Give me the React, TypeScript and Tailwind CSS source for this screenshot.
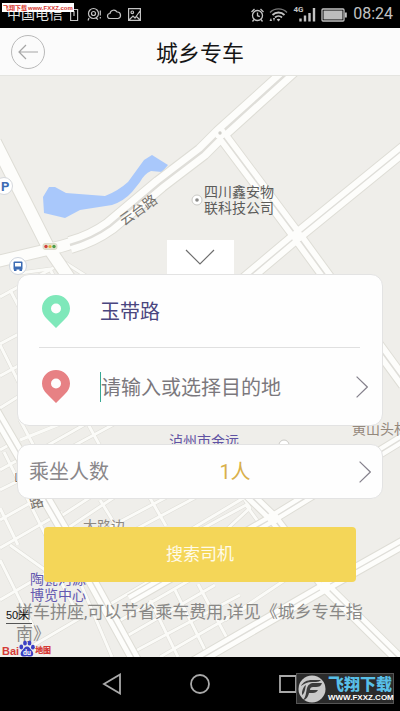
import React, { useState } from "react";

const cjk = "font-[Roboto,'Noto_Sans_CJK_SC',sans-serif]";

type Street = { d: string; w: number; line?: number };

const minorStreets: string[] = [
  "M0 297L64 262L140 310",
  "M20 273L50 269L54 277",
  "M0 344L30 328L10 290",
  "M0 376L40 354",
  "M0 408L24 393L0 345",
  "M20 440L60 424L92 400",
  "M36 452L96 418",
  "M66 450L140 410",
  "M20 420L44 465",
  "M88 424L100 446",
  "M0 450L16 441L90 583",
  "M0 470L18 460",
  "M0 490L22 479",
  "M0 520L46 494",
  "M0 548L62 512",
  "M4 452L48 540",
  "M0 508L18 545",
  "M0 560L34 628",
  "M0 600L48 572L10 545",
  "M34 645L80 618L60 580",
  "M55 520L92 496",
  "M62 532L140 480",
  "M78 544L180 490",
  "M86 556L200 495",
  "M100 500L116 526",
  "M150 498L166 526",
  "M190 530L262 487",
  "M226 530L250 508L240 492",
  "M200 530L246 505L262 527",
  "M80 582L112 657",
  "M100 610L160 575",
  "M112 625L190 580",
  "M120 640L215 585",
  "M128 655L240 595",
  "M150 600L178 657",
  "M175 590L205 650",
  "M198 584L228 640",
  "M225 620L285 580",
  "M160 657L250 605",
];

const roads: Street[] = [
  { d: "M-5 142L48 247L84 300", w: 12 },
  { d: "M-5 262L50 249Q74 244 92 235", w: 11 },
  { d: "M70 245Q92 239 110 226L160 184L202 152L220 134L292 69", w: 16, line: 2.4 },
  { d: "M220 133L297 236L405 384", w: 13, line: 1.6 },
  { d: "M405 148L297 236L240 284L150 350", w: 13, line: 1.4 },
  { d: "M-5 412L62 527L138 665", w: 11, line: 1.4 },
  { d: "M405 437L273 518L130 600", w: 10, line: 1.4 },
  { d: "M240 486L273 518L325 586L405 665", w: 11, line: 1.4 },
  { d: "M405 542L325 587L190 665", w: 11, line: 1.4 },
];

function MapLayer() {
  return (
    <svg
      aria-hidden="true"
      className={`absolute inset-0 h-full w-full ${cjk}`}
      viewBox="0 76 400 581"
      preserveAspectRatio="xMidYMid slice"
    >
      <rect x="-200" y="-100" width="800" height="1000" fill="#efeeea" />
      <path d="M44 213L43 197L49 187L55 187L66 193L105 196Q118 191 128 182L144 160L152 155L168 165L162 172L151 171Q144 174 140 182L132 192Q124 201 112 205L80 210L65 218Z" fill="#a9c8fb" />
      <g fill="none" strokeLinejoin="round">
        {minorStreets.map((d) => <path key={d} d={d} stroke="#deddd7" strokeWidth="4" />)}
        {minorStreets.map((d) => <path key={d} d={d} stroke="#fbfbf8" strokeWidth="3" />)}
        {roads.map((r) => <path key={r.d} d={r.d} stroke="#deddd6" strokeWidth={r.w + 2} />)}
        {roads.map((r) => <path key={r.d} d={r.d} stroke="#fdfdfb" strokeWidth={r.w} />)}
        {roads.filter((r) => r.line).map((r) => <path key={r.d} d={r.d} stroke="#dfded9" strokeWidth={r.line} />)}
      </g>
      <circle cx="297" cy="236" r="6" fill="#fdfdfb" />
      <circle cx="273" cy="518" r="6" fill="#fdfdfb" />
      <circle cx="325" cy="587" r="6" fill="#fdfdfb" />
      <circle cx="220" cy="133" r="6" fill="#fdfdfb" />
      <circle cx="220" cy="133" r="1.7" fill="#cfcec9" />

      <circle cx="4" cy="186" r="8.5" fill="#fff" stroke="#d5d8dc" />
      <text x="1" y="191" fontSize="13" fontWeight="700" fill="#3d6cb4">P</text>
      <circle cx="18" cy="266" r="8.5" fill="#fff" stroke="#cfd5de" />
      <path d="M14.500 261.500h7a1 1 0 0 1 1 1v7h-9v-7a1 1 0 0 1 1-1z" fill="#3d6cb4" />
      <path d="M15 263h6v3.500h-6z" fill="#fff" />
      <path d="M14 269h2.500v2H14zM19.500 269H22v2h-2.500z" fill="#3d6cb4" />
      <rect x="43" y="243.500" width="14" height="6" rx="2" fill="#e6e4cf" stroke="#cfcfb8" strokeWidth=".6" />
      <circle cx="46" cy="246.500" r="1.700" fill="#d3423d" />
      <circle cx="50" cy="246.500" r="1.600" fill="#dfb33c" />
      <circle cx="54" cy="246.500" r="1.700" fill="#4c9d4b" />
      <circle cx="197" cy="200" r="5" fill="#fff" stroke="#cbcac6" />
      <circle cx="197" cy="200" r="1.800" fill="#8a8a88" />
      <circle cx="284" cy="445" r="5" fill="#fff" stroke="#cbcac6" />

      <text x="124" y="226" fontSize="14" fill="#77746f" transform="rotate(-35 124 226)">云台路</text>
      <g fontSize="14" fill="#5c5c5a">
        <text x="204" y="197">四川鑫安物</text>
        <text x="204" y="213">联科技公司</text>
      </g>
      <text x="352" y="434" fontSize="14" fill="#94887c">黄山头村</text>
      <text x="169" y="446" fontSize="14" fill="#5f52a3">泸州市金远</text>
      <text x="83" y="531" fontSize="14" fill="#8d8882">大路边</text>
      <text x="31" y="509" fontSize="14" fill="#77716a" transform="rotate(-15 31 509)">路</text>
      <text x="14" y="481" fontSize="13" fill="#77716a">山</text>
      <g fontSize="14" fill="#6458b0">
        <text x="30" y="584">陶瓷河源</text>
        <text x="30" y="600">博览中心</text>
      </g>
    </svg>
  );
}

function Pin({ className }: { className: string }) {
  return (
    <svg aria-hidden="true" viewBox="0 0 28 33" className={`h-[33px] w-7 shrink-0 ${className}`}>
      <path fillRule="evenodd" fill="currentColor" d="M14 0C6.200 0 0 6 0 13.500c0 4.500 2 7.500 5 10.500l9 9 9-9c3-3 5-6 5-10.500C28 6 21.800 0 14 0zm0 8.500a5 5 0 1 1 0 10 5 5 0 0 1 0-10z" />
    </svg>
  );
}

function ChevronRight() {
  return (
    <svg aria-hidden="true" viewBox="0 0 12 22" className="h-[22px] w-3 shrink-0" fill="none" stroke="#85818c" strokeWidth="1.200">
      <path d="M.6.6L11.300 11L.6 21.400" />
    </svg>
  );
}

function StatusBar() {
  return (
    <div className="relative flex h-7 items-center justify-between bg-black pr-[7px] pl-[7px] text-[#c3c3c3]">
      <div className="flex items-center gap-[6px]">
        <span className="text-sm leading-7 text-[#e2e2e2]">中国电信</span>
        <svg aria-hidden="true" viewBox="0 0 75 16" className="h-4 w-[75px]" fill="none" stroke="currentColor" strokeWidth="1.200">
          <path d="M1.600 3.500h7v11h-7zM5 5v5" />
          <circle cx="24.500" cy="7.500" r="5" />
          <circle cx="24.500" cy="7.500" r="2" />
          <path d="M20 12l-1 2.500M27 12l2 1.500M31.300 4.500v5M31.300 11v1.400" />
          <path d="M41 12.500a2.500 2.500 0 0 1 0-5 3.800 3.800 0 0 1 7-1.500 3.300 3.300 0 0 1 1 6.500z" />
          <path d="M59.600 2.600h11.800v11.800H59.600zM60 14l4-4 2 2 5-7M67 10l4 4" />
          <circle cx="63.300" cy="6.300" r="1.300" />
        </svg>
      </div>
      <div className="flex items-center">
        <svg aria-hidden="true" viewBox="0 0 98 20" className="mr-[5px] h-5 w-[98px]" fill="none" stroke="currentColor" strokeWidth="1.300">
          <circle cx="7.500" cy="11.500" r="5" />
          <path d="M7.500 8.500v3.200l2.300 1M1.500 8l3-3M13.500 8l-3-3M4 15.500l-1.500 2M11 15.500l1.500 2" />
          <path d="M20 8.500a12 12 0 0 1 17 0" stroke="#777" />
          <path d="M22.500 11a8.500 8.500 0 0 1 12 0M25 13.500a5 5 0 0 1 7 0" strokeWidth="1.800" />
          <path d="M28.500 17.500l-1.800-2a2.600 2.600 0 0 1 3.600 0zM19.500 17l1.500-3 1 3zM23 14l1 3.500 1-3.500z" fill="currentColor" stroke="none" />
          <path d="M50.500 17.500v-3M55 17.500v-6M59.500 17.500V9M64 17.500V4" strokeWidth="2.400" />
          <text x="43.500" y="7.500" fontSize="8" fontWeight="700" fill="currentColor" stroke="none">4G</text>
          <rect x="72" y="5" width="22" height="12" rx="1" />
          <rect x="73.500" y="6.500" width="19" height="9" fill="#bdbdbd" stroke="none" />
          <path d="M95.800 8.500v5" strokeWidth="2" />
        </svg>
        <time className="text-base">08:24</time>
      </div>
      <span className="absolute top-[3px] left-[2px] flex h-[9px] items-center gap-px bg-white px-px text-[6px] leading-none font-bold whitespace-nowrap text-[#d8352c]">
        <span>飞翔下载</span>
        <span className="font-['Liberation_Sans',sans-serif]">www.FXXZ.com</span>
      </span>
    </div>
  );
}

function BaiduLogo() {
  return (
    <div className="absolute bottom-0 left-[2px] flex items-center text-[#d53b38]">
      <span className="pt-1 font-['Liberation_Sans',sans-serif] text-[11px] leading-3 font-bold">Bai</span>
      <svg aria-hidden="true" viewBox="0 0 16 17" className="h-[17px] w-4" fill="#3b3fc4">
        <ellipse cx="2.300" cy="7" rx="1.900" ry="2.400" />
        <ellipse cx="6" cy="3" rx="1.900" ry="2.600" />
        <ellipse cx="10.500" cy="3" rx="1.900" ry="2.600" />
        <ellipse cx="13.900" cy="7.200" rx="1.900" ry="2.400" />
        <path d="M8 6.500c2.300 0 3 2 4.600 3.700 2.300 2.300 2.300 6-.8 6.300-1.500.2-2.200-.3-3.800-.3s-2.300.5-3.800.3c-3.100-.3-3.300-4-.9-6.300C5 8.500 5.700 6.500 8 6.500z" />
        <text x="4" y="14.700" fontSize="7" fontWeight="700" fill="#fff">du</text>
      </svg>
      <span className="pt-1 text-[8px] leading-3 font-black">地图</span>
    </div>
  );
}

function Watermark() {
  return (
    <div className="absolute right-[6px] bottom-[7px] flex h-[31px] w-[98px] items-center gap-[2px] border border-[#555] bg-[#2b2b2b] pl-px">
      <svg aria-hidden="true" viewBox="0 0 28 28" className="h-7 w-7 shrink-0">
        <circle cx="14" cy="14" r="13.500" fill="#c9c9c9" />
        <path d="M5 25c3-3 3-8 4-12 1-3 3-5 7-5h8c-1 3-3 4-6 4h-3c-2 0-3 1-3 3h8c-1 2-3 3-5 3h-4c-1 4-3 7-6 7zM3 11c2-4 6-6 11-6h9c-1 1-3 2-5 2h-4C9 7 6 9 3 11zM4 17c1-4 2-6 4-7-1 4-1 8-4 10z" fill="#3c3c3c" />
      </svg>
      <div className="flex flex-col items-start whitespace-nowrap">
        <span className="text-base leading-[18px] font-black text-[#58bfe8]">飞翔下载</span>
        <span className="font-['Liberation_Sans',sans-serif] text-[8px] leading-[8px] font-bold text-white">WWW.FXXZ.COM</span>
      </div>
    </div>
  );
}

export default function App() {
  const [start, setStart] = useState("玉带路");
  const [destination, setDestination] = useState("");

  return (
    <div className={`w-full bg-black ${cjk}`} lang="zh-CN">
      <StatusBar />
      <header className="grid h-12 grid-cols-[1fr_auto_1fr] items-center border-b border-[#e4e4e0] bg-[#fbfbfb] px-[11px]">
        <button aria-label="返回" className="flex size-[34px] items-center justify-center rounded-full border border-[#b9b9b9] text-[#a5a5a5]">
          <svg aria-hidden="true" viewBox="0 0 20 16" className="h-4 w-5" fill="none" stroke="currentColor" strokeWidth="1.200">
            <path d="M20 8H1M8 1L1 8l7 7" />
          </svg>
        </button>
        <h1 className="pt-1 text-[22px] leading-8 text-[#151515]">城乡专车</h1>
      </header>

      <main className="relative overflow-hidden">
        <MapLayer />
        <div className="relative flex flex-col pt-[164px] pb-3">
          <button aria-label="收起" className="flex h-[34px] w-[67px] items-center justify-center self-center bg-white">
            <svg aria-hidden="true" viewBox="0 0 30 16" className="h-4 w-[30px]" fill="none" stroke="#6e6e6e" strokeWidth="1.200">
              <path d="M1 1l14 14L29 1" />
            </svg>
          </button>

          <section className="mx-[17px] rounded-xl border border-[#e3e3e3] bg-[#fefefe] pr-[14px] pl-6">
            <label className="flex h-[72px] items-center gap-[30px]">
              <Pin className="text-[#7fe8ba]" />
              <input
                aria-label="出发地"
                value={start}
                onChange={(e) => setStart(e.target.value)}
                className="min-w-0 flex-1 bg-transparent pt-[2px] text-xl text-[#4a467f] outline-none"
              />
            </label>
            <div className="mr-2 -ml-[3px] h-px bg-[#e0e0e0]" />
            <div className="flex h-[77px] items-center">
              <label className="flex min-w-0 flex-1 items-center gap-[30px]">
                <Pin className="text-[#e78184]" />
                <input
                  aria-label="目的地"
                  value={destination}
                  onChange={(e) => setDestination(e.target.value)}
                  placeholder="请输入或选择目的地"
                  className="min-w-0 flex-1 border-l border-[#38a894] bg-transparent pt-[2px] text-xl leading-7 text-[#4a467f] outline-none placeholder:text-[#7b787d]"
                />
              </label>
              <button aria-label="选择目的地"><ChevronRight /></button>
            </div>
          </section>

          <button className="mx-[17px] mt-[18px] grid h-[55px] grid-cols-[1fr_auto_1fr] items-center rounded-xl border border-[#e3e3e3] bg-[#fefefe] px-[11px] text-xl">
            <span className="text-left text-[#8a878a]">乘坐人数</span>
            <span className="pl-[70px] text-[#d9b04a]">1人</span>
            <span className="justify-self-end"><ChevronRight /></span>
          </button>

          <button className="mx-11 mt-7 h-[55px] rounded bg-[#f4d658] text-[17px] text-[#fffbe9]">
            搜索司机
          </button>

          <p className="mt-[19px] pr-6 pl-4 text-[17px] leading-[22px] text-[#898886]">
            拼车拼座,可以节省乘车费用,详见《城乡专车指南》
          </p>
        </div>

        <div className="absolute bottom-[33px] left-[6px] w-[26px] border-b border-[#555] font-['Liberation_Sans','Noto_Sans_CJK_SC',sans-serif] text-[11px] leading-4 whitespace-nowrap text-[#111]">
          50米
        </div>
        <BaiduLogo />
      </main>

      <nav className="relative grid h-[54px] grid-cols-3 items-center justify-items-center bg-black px-[68px] text-[#a9a9a9]">
        <button aria-label="后退">
          <svg aria-hidden="true" viewBox="0 0 22 22" className="size-[22px]" fill="none" stroke="currentColor" strokeWidth="1.800">
            <path d="M19 1.500v19L3 11z" />
          </svg>
        </button>
        <button aria-label="主页">
          <svg aria-hidden="true" viewBox="0 0 22 22" className="size-[22px]" fill="none" stroke="currentColor" strokeWidth="1.800">
            <circle cx="11" cy="11" r="9" />
          </svg>
        </button>
        <button aria-label="最近任务">
          <svg aria-hidden="true" viewBox="0 0 22 22" className="size-[22px]" fill="none" stroke="currentColor" strokeWidth="1.800">
            <path d="M3 3h16v16H3z" />
          </svg>
        </button>
        <Watermark />
      </nav>
    </div>
  );
}
